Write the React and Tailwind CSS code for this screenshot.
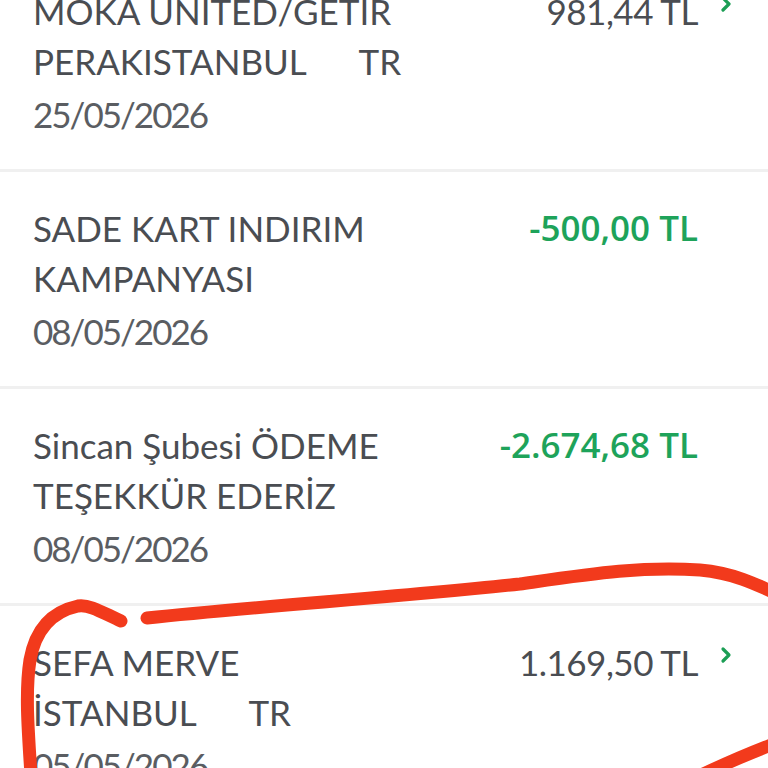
import React from 'react';

const rows = [
    { lines: ['MOKA UNITED/GETIR', 'PERAKISTANBUL      TR'], date: '25/05/2026', amount: '981,44 TL', credit: false },
    { lines: ['SADE KART INDIRIM', 'KAMPANYASI'], date: '08/05/2026', amount: '-500,00 TL', credit: true },
    { lines: ['Sincan Şubesi ÖDEME', 'TEŞEKKÜR EDERİZ'], date: '08/05/2026', amount: '-2.674,68 TL', credit: true },
    { lines: ['SEFA MERVE', 'İSTANBUL      TR'], date: '05/05/2026', amount: '1.169,50 TL', credit: false },
];

function Chevron() {
    return (
        <svg width="12" height="18" viewBox="0 0 12 18" className="mt-[-14px]">
            <polyline points="3,3 9,9 3,15" fill="none" stroke="#1c9e55" strokeWidth="3.2" strokeLinecap="round" strokeLinejoin="round" />
        </svg>
    );
}

export default function App() {
    return (
        <div className="relative w-full h-[768px] overflow-hidden bg-white" style={{ fontFamily: 'Lato, "Open Sans", sans-serif' }}>
            {/* ── Transactions ── */}
            <div className="mt-[-48px]">
                {rows.map((r, i) => (
                    <div key={i} className="flex border-t-[3px] border-[#f0f0f0] pt-[31px] pb-[30px] pl-[33px] pr-[36px]">
                        <div className="flex-1 min-w-0">
                            {r.lines.map((l, j) => (
                                <p key={j} className="text-[35px] leading-[50px] text-[#4a4d52] whitespace-pre">{l}</p>
                            ))}
                            <p className="mt-[3px] text-[35px] leading-[50px] text-[#5a5d62] tracking-[-2px]">{r.date}</p>
                        </div>
                        <div className="flex items-center h-[50px] gap-[22px]">
                            {r.credit ? (
                                <span className="text-[35px] leading-[50px] text-[#1ea35a] font-semibold" style={{ fontFamily: '"Open Sans", sans-serif' }}>{r.amount}</span>
                            ) : (
                                <span className="text-[35px] leading-[50px] text-[#4a4d52] tracking-[-0.5px]">{r.amount}</span>
                            )}
                            <div className="w-[12px] flex">{!r.credit && <Chevron />}</div>
                        </div>
                    </div>
                ))}
            </div>

            {/* ── Hand-drawn annotation ── */}
            <svg className="absolute inset-0 pointer-events-none" width="768" height="768" viewBox="0 0 768 768">
                <g fill="none" stroke="#f23a1c" strokeWidth="13" strokeLinecap="round" strokeLinejoin="round">
                    <path d="M121 621 C105 614 90 604 78 606 C55 611 36 626 30 660 C25 692 28 730 32 790" />
                    <path d="M147 618 C260 606 400 597 520 584 C590 574 640 566 700 570 C735 573 758 585 790 600" />
                    <path d="M695 778 C720 766 750 752 790 738" />
                </g>
            </svg>
        </div>
    );
}
